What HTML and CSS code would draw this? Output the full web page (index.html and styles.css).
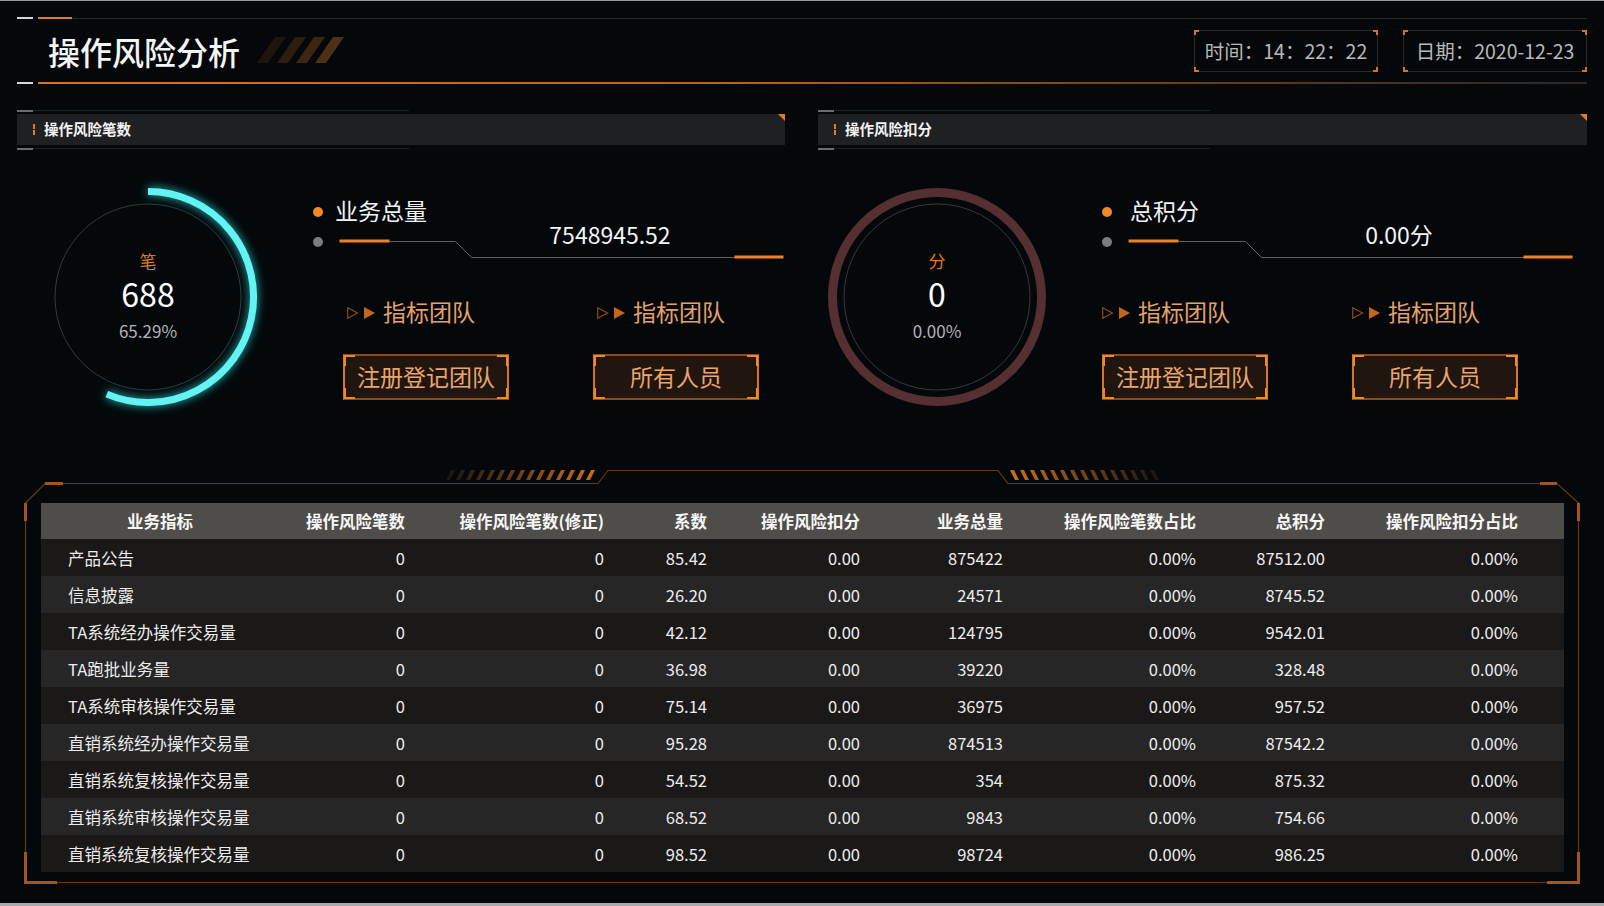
FILE: index.html
```html
<!DOCTYPE html>
<html lang="zh-CN">
<head>
<meta charset="utf-8">
<title>操作风险分析</title>
<link rel="stylesheet" href="styles.css">
</head>
<body>
<div class="page">
  <header class="header">
    <div class="rule"><i class="seg-w"></i><i class="seg-o"></i><i class="seg-g"></i></div>
    <div class="title-row">
      <h1 class="title">操作风险分析</h1>
      <svg class="title-stripes" width="88" height="27" viewBox="0 0 88 27">
        <polygon points="0,26 11,26 29,0 18,0" fill="#1e150d"/>
        <polygon points="20,26 31,26 49,0 38,0" fill="#2b1d10"/>
        <polygon points="39,26 50,26 68,0 57,0" fill="#3b2612"/>
        <polygon points="58,26 69,26 87,0 76,0" fill="#4d3015"/>
      </svg>
      <div class="clocks">
        <div class="clock corners">时间：14：22：22</div>
        <div class="clock corners">日期：2020-12-23</div>
      </div>
    </div>
    <div class="rule rule-bottom"><i class="seg-w"></i><i class="seg-o"></i></div>
  </header>

  <main class="panels">
    <section class="panel panel-count">
      <div class="panel-head">
        <div class="ph-line"><i></i></div>
        <div class="ph-bar"><span class="ph-mark"></span><h2>操作风险笔数</h2></div>
        <div class="ph-line"><i></i></div>
      </div>
      <div class="panel-body">
        <div class="gauge">
          <svg class="gauge-art" width="220" height="220" viewBox="0 0 220 220">
            <defs>
              <filter id="glow" x="-30%" y="-30%" width="160%" height="160%">
                <feGaussianBlur stdDeviation="4"/>
              </filter>
            </defs>
            <circle cx="110" cy="110" r="93" fill="none" stroke="#34383b" stroke-width="1"/>
            <path d="M110 4.5 A105.5 105.5 0 1 1 68.8 207.1" fill="none" stroke="#2fd6d6" stroke-width="9" opacity="0.7" filter="url(#glow)"/>
            <path d="M110 4.5 A105.5 105.5 0 1 1 68.8 207.1" fill="none" stroke="#62f3f3" stroke-width="7"/>
          </svg>
          <div class="gauge-text">
            <span class="g-unit">笔</span>
            <span class="g-val">688</span>
            <span class="g-pct">65.29%</span>
          </div>
        </div>
        <div class="info-col">
          <div class="info">
            <div class="info-row"><i class="dot dot-o"></i><span class="info-label">业务总量</span></div>
            <div class="info-conn">
              <i class="dot dot-g"></i>
              <svg class="conn-lines" width="446" height="34" viewBox="0 0 446 34">
                <path d="M50.5 14.5 H116.5 L132.5 30.5 H396" fill="none" stroke="#5f6366" stroke-width="1"/>
                <line x1="0.5" y1="14" x2="50.5" y2="14" stroke="#ef8322" stroke-width="3"/>
                <line x1="395.5" y1="30" x2="444.5" y2="30" stroke="#ef8322" stroke-width="3"/>
              </svg>
              <span class="info-value">7548945.52</span>
            </div>
          </div>
          <div class="teams">
            <div class="team">
              <div class="team-label">
                <svg class="team-arrows" width="28" height="12" viewBox="0 0 28 12"><polygon points="0.7,0.8 10.5,6 0.7,11.2" fill="none" stroke="#8e4c17" stroke-width="1.2"/><polygon points="17,0 28,6 17,12" fill="#c5661b"/></svg>
                <span>指标团队</span>
              </div>
              <div class="team-btn corners">注册登记团队</div>
            </div>
            <div class="team">
              <div class="team-label">
                <svg class="team-arrows" width="28" height="12" viewBox="0 0 28 12"><polygon points="0.7,0.8 10.5,6 0.7,11.2" fill="none" stroke="#8e4c17" stroke-width="1.2"/><polygon points="17,0 28,6 17,12" fill="#c5661b"/></svg>
                <span>指标团队</span>
              </div>
              <div class="team-btn corners">所有人员</div>
            </div>
          </div>
        </div>
      </div>
    </section>

    <section class="panel panel-score">
      <div class="panel-head">
        <div class="ph-line"><i></i></div>
        <div class="ph-bar"><span class="ph-mark"></span><h2>操作风险扣分</h2></div>
        <div class="ph-line"><i></i></div>
      </div>
      <div class="panel-body">
        <div class="gauge">
          <svg class="gauge-art" width="220" height="220" viewBox="0 0 220 220">
            <circle cx="110" cy="110" r="104.5" fill="none" stroke="#552f31" stroke-width="9"/>
            <circle cx="110" cy="110" r="93" fill="none" stroke="#34383b" stroke-width="1"/>
          </svg>
          <div class="gauge-text">
            <span class="g-unit">分</span>
            <span class="g-val">0</span>
            <span class="g-pct">0.00%</span>
          </div>
        </div>
        <div class="info-col">
          <div class="info">
            <div class="info-row"><i class="dot dot-o"></i><span class="info-label">总积分</span></div>
            <div class="info-conn">
              <i class="dot dot-g"></i>
              <svg class="conn-lines" width="446" height="34" viewBox="0 0 446 34">
                <path d="M50.5 14.5 H117.5 L133.5 30.5 H396" fill="none" stroke="#5f6366" stroke-width="1"/>
                <line x1="0.5" y1="14" x2="50.5" y2="14" stroke="#ef8322" stroke-width="3"/>
                <line x1="395.5" y1="30" x2="444.5" y2="30" stroke="#ef8322" stroke-width="3"/>
              </svg>
              <span class="info-value">0.00分</span>
            </div>
          </div>
          <div class="teams">
            <div class="team">
              <div class="team-label">
                <svg class="team-arrows" width="28" height="12" viewBox="0 0 28 12"><polygon points="0.7,0.8 10.5,6 0.7,11.2" fill="none" stroke="#8e4c17" stroke-width="1.2"/><polygon points="17,0 28,6 17,12" fill="#c5661b"/></svg>
                <span>指标团队</span>
              </div>
              <div class="team-btn corners">注册登记团队</div>
            </div>
            <div class="team">
              <div class="team-label">
                <svg class="team-arrows" width="28" height="12" viewBox="0 0 28 12"><polygon points="0.7,0.8 10.5,6 0.7,11.2" fill="none" stroke="#8e4c17" stroke-width="1.2"/><polygon points="17,0 28,6 17,12" fill="#c5661b"/></svg>
                <span>指标团队</span>
              </div>
              <div class="team-btn corners">所有人员</div>
            </div>
          </div>
        </div>
      </div>
    </section>
  </main>

  <section class="table-wrap">
    <svg class="frame" width="1556" height="415" viewBox="0 0 1556 415">
      <defs>
        <pattern id="slashR" x="422" y="0" width="10" height="12" patternUnits="userSpaceOnUse">
          <polygon points="0,11 4,11 9,1 5,1" fill="#d06d1e"/>
        </pattern>
        <pattern id="slashL" x="986" y="0" width="10" height="12" patternUnits="userSpaceOnUse">
          <polygon points="0,1 4,1 9,11 5,11" fill="#d06d1e"/>
        </pattern>
        <linearGradient id="fadeUp" x1="0" y1="0" x2="1" y2="0">
          <stop offset="0" stop-color="#fff" stop-opacity="0.12"/>
          <stop offset="1" stop-color="#fff" stop-opacity="1"/>
        </linearGradient>
        <linearGradient id="fadeDown" x1="0" y1="0" x2="1" y2="0">
          <stop offset="0" stop-color="#fff" stop-opacity="1"/>
          <stop offset="1" stop-color="#fff" stop-opacity="0.12"/>
        </linearGradient>
        <mask id="maskR"><rect x="422" y="0" width="150" height="12" fill="url(#fadeUp)"/></mask>
        <mask id="maskL"><rect x="986" y="0" width="150" height="12" fill="url(#fadeDown)"/></mask>
      </defs>
      <path d="M1.5 34 L21 14.5 H574 L584 1.5 H974 L984 14.5 H1533 L1554.5 34 V413.5 H1.5 Z" fill="none" stroke="#683910" stroke-width="1.2"/>
      <g stroke="#a2561a" stroke-width="3" fill="none">
        <path d="M21 14.5 H39"/>
        <path d="M1.5 34 V52"/>
        <path d="M1.5 383 V413.5 H33"/>
        <path d="M1516 14.5 H1533"/>
        <path d="M1554.5 34 V52"/>
        <path d="M1523 413.5 H1554.5 V383"/>
      </g>
      <rect x="422" y="0" width="150" height="12" fill="url(#slashR)" mask="url(#maskR)"/>
      <rect x="986" y="0" width="150" height="12" fill="url(#slashL)" mask="url(#maskL)"/>
    </svg>
    <table class="data">
      <colgroup>
        <col class="c1"><col class="c2"><col class="c3"><col class="c4"><col class="c5"><col class="c6"><col class="c7"><col class="c8"><col class="c9">
      </colgroup>
      <thead>
        <tr><th>业务指标</th><th>操作风险笔数</th><th>操作风险笔数(修正)</th><th>系数</th><th>操作风险扣分</th><th>业务总量</th><th>操作风险笔数占比</th><th>总积分</th><th>操作风险扣分占比</th></tr>
      </thead>
      <tbody>
        <tr><td>产品公告</td><td>0</td><td>0</td><td>85.42</td><td>0.00</td><td>875422</td><td>0.00%</td><td>87512.00</td><td>0.00%</td></tr>
        <tr><td>信息披露</td><td>0</td><td>0</td><td>26.20</td><td>0.00</td><td>24571</td><td>0.00%</td><td>8745.52</td><td>0.00%</td></tr>
        <tr><td>TA系统经办操作交易量</td><td>0</td><td>0</td><td>42.12</td><td>0.00</td><td>124795</td><td>0.00%</td><td>9542.01</td><td>0.00%</td></tr>
        <tr><td>TA跑批业务量</td><td>0</td><td>0</td><td>36.98</td><td>0.00</td><td>39220</td><td>0.00%</td><td>328.48</td><td>0.00%</td></tr>
        <tr><td>TA系统审核操作交易量</td><td>0</td><td>0</td><td>75.14</td><td>0.00</td><td>36975</td><td>0.00%</td><td>957.52</td><td>0.00%</td></tr>
        <tr><td>直销系统经办操作交易量</td><td>0</td><td>0</td><td>95.28</td><td>0.00</td><td>874513</td><td>0.00%</td><td>87542.2</td><td>0.00%</td></tr>
        <tr><td>直销系统复核操作交易量</td><td>0</td><td>0</td><td>54.52</td><td>0.00</td><td>354</td><td>0.00%</td><td>875.32</td><td>0.00%</td></tr>
        <tr><td>直销系统审核操作交易量</td><td>0</td><td>0</td><td>68.52</td><td>0.00</td><td>9843</td><td>0.00%</td><td>754.66</td><td>0.00%</td></tr>
        <tr><td>直销系统复核操作交易量</td><td>0</td><td>0</td><td>98.52</td><td>0.00</td><td>98724</td><td>0.00%</td><td>986.25</td><td>0.00%</td></tr>
      </tbody>
    </table>
  </section>
</div>
</body>
</html>
```

FILE: styles.css
```css
* { box-sizing: border-box; margin: 0; padding: 0; }

html, body {
  width: 1604px;
  height: 906px;
  overflow: hidden;
}

body {
  background: #04080b;
  color: #fff;
  font-family: "Noto Sans CJK SC", "Noto Sans", sans-serif;
  border-top: 1px solid #9a9a9a;
  border-bottom: 3px solid #a9a9a9;
}

.page {
  padding: 16px 17px 0;
}

/* ---------- header ---------- */
.rule {
  display: flex;
  align-items: center;
  height: 2px;
}
.rule i { display: block; height: 2px; }
.rule .seg-w { width: 16px; background: #d6d6d6; }
.rule .seg-o { width: 34px; margin-left: 5px; background: #e27c1c; }
.rule .seg-g { flex: 1; height: 1px; background: #25292c; }
.rule-bottom .seg-o {
  flex: 1;
  background: linear-gradient(90deg, #d9761c 0%, #b8641b 45%, #6a3e18 75%, #2c2520 100%);
}

.title-row {
  display: flex;
  align-items: center;
  height: 63px;
}
.title {
  margin-left: 31px;
  font-size: 32px;
  font-weight: 500;
  line-height: 1;
  color: #f4f4f4;
}
.title-stripes {
  display: block;
  margin-left: 17px;
}
.clocks {
  margin-left: auto;
  display: flex;
  gap: 25px;
}
.clock {
  position: relative;
  width: 184px;
  height: 42px;
  border: 1px solid #26292b;
  display: flex;
  align-items: center;
  justify-content: center;
  font-size: 19.5px;
  color: #b9b9b9;
  --c: #d8731b;
  --cl: 5px;
  --ct: 2px;
}

.corners::after {
  content: "";
  position: absolute;
  inset: -1px;
  pointer-events: none;
  background:
    linear-gradient(var(--c), var(--c)) left top / var(--cl) var(--ct),
    linear-gradient(var(--c), var(--c)) left top / var(--ct) var(--cl),
    linear-gradient(var(--c), var(--c)) right top / var(--cl) var(--ct),
    linear-gradient(var(--c), var(--c)) right top / var(--ct) var(--cl),
    linear-gradient(var(--c), var(--c)) left bottom / var(--cl) var(--ct),
    linear-gradient(var(--c), var(--c)) left bottom / var(--ct) var(--cl),
    linear-gradient(var(--c), var(--c)) right bottom / var(--cl) var(--ct),
    linear-gradient(var(--c), var(--c)) right bottom / var(--ct) var(--cl);
  background-repeat: no-repeat;
}

/* ---------- panels ---------- */
.panels {
  display: flex;
  gap: 33px;
  margin-top: 26px;
}
.panel-count { width: 768px; }
.panel-score { width: 769px; }

.ph-line {
  width: 392px;
  height: 2px;
  display: flex;
  align-items: flex-start;
  background: linear-gradient(#1c2124, #1c2124) 0 0 / 100% 1px no-repeat;
}
.ph-line i {
  display: block;
  width: 16px;
  height: 2px;
  background: #6c6c6c;
}
.ph-bar {
  position: relative;
  height: 31px;
  margin: 2px 0 3px;
  background: #1f2022;
  display: flex;
  align-items: center;
  padding-left: 16px;
}
.ph-bar::after {
  content: "";
  position: absolute;
  top: 0;
  right: 0;
  border-top: 7px solid #e27c1c;
  border-left: 7px solid transparent;
}
.ph-mark {
  width: 2px;
  height: 11px;
  background: linear-gradient(#e27c1c 0 42%, transparent 42% 58%, #e27c1c 58% 100%);
}
.ph-bar h2 {
  margin-left: 9px;
  font-size: 14.5px;
  font-weight: 700;
  color: #f2f2f2;
  line-height: 1;
}

.panel-body {
  display: flex;
  align-items: flex-start;
  height: 319px;
}
.gauge {
  position: relative;
  width: 220px;
  height: 220px;
  margin-top: 37px;
  margin-left: 21px;
}
.panel-score .gauge { margin-left: 9px; }
.gauge-art {
  position: absolute;
  inset: 0;
  overflow: visible;
}
.gauge-text {
  position: relative;
  display: flex;
  flex-direction: column;
  align-items: center;
  padding-top: 64px;
}
.g-unit {
  font-size: 17px;
  line-height: 20px;
  color: #df7a1c;
}
.g-val {
  margin-top: 4px;
  font-size: 32px;
  line-height: 36px;
  color: #fff;
}
.g-pct {
  margin-top: 10px;
  font-size: 17px;
  line-height: 20px;
  color: #b3b3b3;
}

.info-col {
  margin-left: 55px;
  margin-top: 47px;
}
.info { width: 472px; }
.info-row {
  display: flex;
  align-items: center;
  height: 30px;
}
.dot {
  display: block;
  width: 10px;
  height: 10px;
  border-radius: 50%;
}
.dot-o { background: #f08a24; }
.dot-g { background: #7b7d80; margin-top: 10px; }
.info-label {
  margin-left: 12px;
  margin-bottom: 4px;
  font-size: 23px;
  line-height: 30px;
  color: #f2f2f2;
}
.panel-score .info-label { margin-left: 18px; }
.info-conn {
  position: relative;
  display: flex;
  align-items: flex-start;
  height: 34px;
}
.conn-lines {
  display: block;
  margin-left: 16px;
}
.info-value {
  position: absolute;
  left: 197px;
  top: -6px;
  width: 200px;
  text-align: center;
  font-size: 23px;
  line-height: 26px;
  color: #f4f4f4;
}

.teams {
  display: grid;
  grid-template-columns: 166px 166px;
  column-gap: 84px;
  margin-top: 36px;
  margin-left: 30px;
}
.panel-score .teams { margin-left: 0; }
.team-label {
  display: flex;
  align-items: center;
  height: 32px;
  padding-bottom: 4px;
  font-size: 23px;
  color: #e3a16b;
}
.team-arrows {
  display: block;
  margin-left: 4px;
  margin-right: 8px;
  margin-top: 4px;
}
.panel-score .team-arrows { margin-left: 0; }
.team-btn {
  position: relative;
  margin-top: 25px;
  height: 46px;
  padding-bottom: 2px;
  display: flex;
  align-items: center;
  justify-content: center;
  background: #20160f;
  border: 2px solid #8d4b17;
  border-left-color: #d9761c;
  border-right-color: #d9761c;
  font-size: 23px;
  color: #e8a56d;
  --c: #f08a24;
  --cl: 11px;
  --ct: 2px;
}

/* ---------- table ---------- */
.table-wrap {
  position: relative;
  width: 1556px;
  height: 415px;
  margin-left: 7px;
  padding: 34px 16px 12px 17px;
}
.frame {
  position: absolute;
  left: 0;
  top: 0;
  overflow: visible;
}
.data {
  position: relative;
  width: 1523px;
  table-layout: fixed;
  border-collapse: collapse;
  font-size: 16.5px;
}
.c1 { width: 238px; }
.c2 { width: 126px; }
.c3 { width: 199px; }
.c4 { width: 103px; }
.c5 { width: 153px; }
.c6 { width: 143px; }
.c7 { width: 193px; }
.c8 { width: 129px; }
.c9 { width: 239px; }

.data th {
  height: 36px;
  background: #4f4d49;
  font-weight: 700;
  color: #f6f6f6;
  text-align: right;
  padding: 0;
  white-space: nowrap;
}
.data th:first-child { text-align: center; }
.data td {
  height: 37px;
  padding: 0;
  text-align: right;
  color: #ececec;
  white-space: nowrap;
}
.data td:first-child {
  text-align: left;
  padding-left: 27px;
}
.data th:last-child,
.data td:last-child { padding-right: 46px; }
.data tbody tr:nth-child(odd) { background: #1b1917; }
.data tbody tr:nth-child(even) { background: #262626; }
```
